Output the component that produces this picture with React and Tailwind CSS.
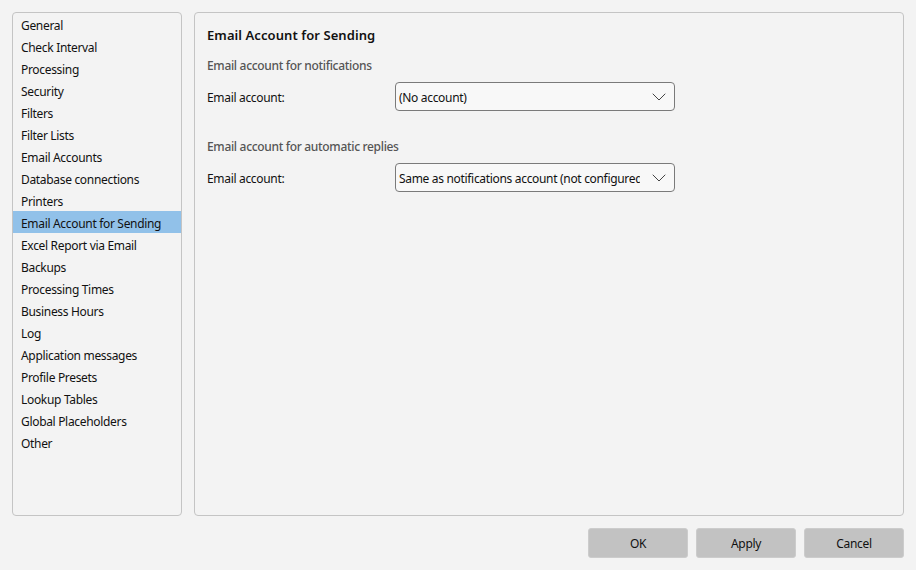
import React from "react";
import { ChevronDown } from "lucide-react";

const items = [
  "General",
  "Check Interval",
  "Processing",
  "Security",
  "Filters",
  "Filter Lists",
  "Email Accounts",
  "Database connections",
  "Printers",
  "Email Account for Sending",
  "Excel Report via Email",
  "Backups",
  "Processing Times",
  "Business Hours",
  "Log",
  "Application messages",
  "Profile Presets",
  "Lookup Tables",
  "Global Placeholders",
  "Other",
];

function AccountSelect({ value }) {
  return (
    <div className="w-[280px] h-[29px] flex items-center bg-[#f8f8f8] border border-[#7a7a7a] rounded-[4px] pl-[3px] pr-[3px]">
      <span className="w-[241px] pt-[2px] overflow-hidden whitespace-nowrap">{value}</span>
      <ChevronDown className="ml-auto text-[#444444]" size={24} strokeWidth={1} />
    </div>
  );
}

function Field({ value }) {
  return (
    <div className="flex items-center">
      <span className="w-[188px] pt-[2px]">Email account:</span>
      <AccountSelect value={value} />
    </div>
  );
}

export default function App() {
  return (
    <div
      className="w-[916px] h-[570px] overflow-hidden bg-[#f3f3f3] text-[#111111] text-[12px] tracking-[-0.32px] p-[12px] flex flex-col"
      style={{ fontFamily: '"Noto Sans", "Open Sans", sans-serif' }}
    >
      <div className="flex gap-[12px] h-[504px]">
        <div className="w-[170px] border border-[#c4c4c4] rounded-[4px] flex flex-col">
          {items.map((item) => (
            <div
              key={item}
              className={
                "h-[22px] shrink-0 flex items-center pl-[8px] pt-[3px] whitespace-nowrap " +
                (item === "Email Account for Sending" ? "bg-[#91c1e9]" : "")
              }
            >
              {item}
            </div>
          ))}
        </div>
        <div className="flex-1 border border-[#c4c4c4] rounded-[4px] pl-[12px] pt-[13px]">
          <div className="text-[13px] tracking-[0.08px] font-semibold leading-[18px]">Email Account for Sending</div>
          <div className="text-[#555555] font-medium leading-[16px] mt-[14px]">
            Email account for notifications
          </div>
          <div className="mt-[8px]">
            <Field value="(No account)" />
          </div>
          <div className="text-[#555555] font-medium leading-[16px] mt-[28px]">
            Email account for automatic replies
          </div>
          <div className="mt-[8px]">
            <Field value="Same as notifications account (not configured)" />
          </div>
        </div>
      </div>
      <div className="flex justify-end gap-[8px] mt-[12px]">
        {["OK", "Apply", "Cancel"].map((label) => (
          <button
            key={label}
            className="w-[100px] h-[30px] pt-[2px] bg-[#c2c2c2] border border-[#cccccc] rounded-[3px] flex items-center justify-center"
          >
            {label}
          </button>
        ))}
      </div>
    </div>
  );
}
